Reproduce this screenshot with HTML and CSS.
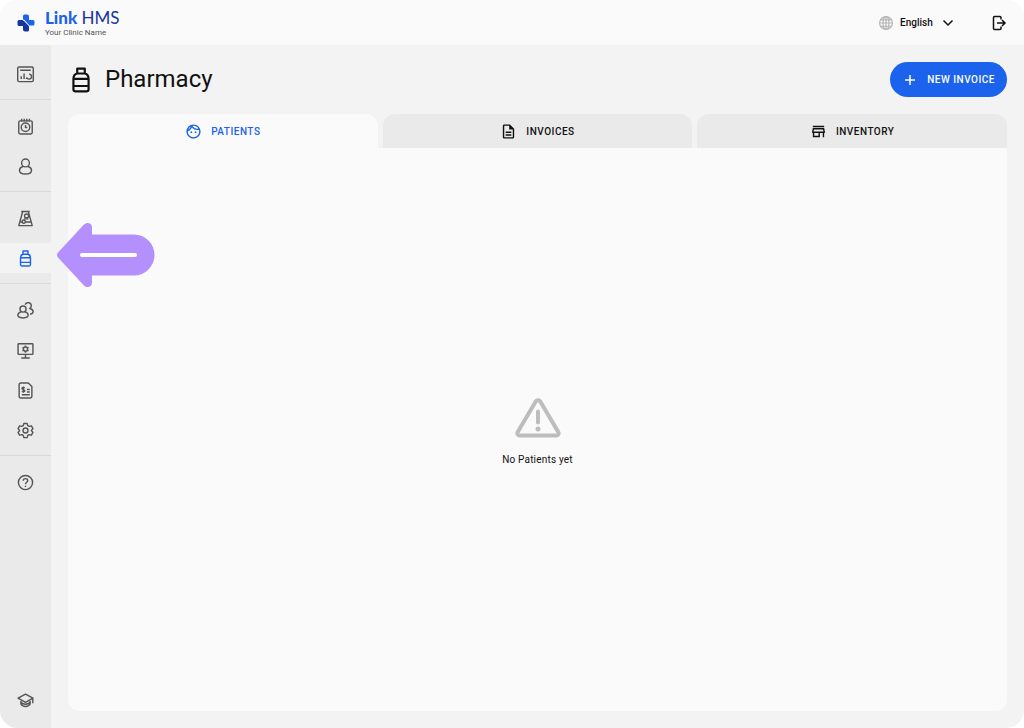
FILE: index.html
```html
<!DOCTYPE html>
<html lang="en">
<head>
  <meta charset="UTF-8">
  <meta name="viewport" content="width=device-width, initial-scale=1">
  <title>Pharmacy - Link HMS</title>
  <link rel="stylesheet" href="styles.css">
</head>
<body>
  <div class="app">
    <header class="topbar">
      <a class="brand" href="#">
        <svg class="brand-mark" viewBox="0 0 36 36" aria-hidden="true">
          <path fill="#1b63ed" d="M12 4a3 3 0 0 1 3-3h5a4 4 0 0 1 4 4v7h8a3 3 0 0 1 3 3v5a3 3 0 0 1-3 3h-6c-2 0-3-1-4-2l-5-6c-1-1-2-3-4-3h-1z"/>
          <path fill="#14359b" d="M1 15a3 3 0 0 1 3-3h6c2 0 3 1 4 2l9 9c1 1 1 2 1 3v6a3 3 0 0 1-3 3h-5a4 4 0 0 1-4-4v-7H4a3 3 0 0 1-3-3z"/>
          <path stroke="#fafafa" stroke-width="1.5" d="M11 11.500q3 0 5 2l8 9.500" fill="none"/>
        </svg>
        <span class="brand-text">
          <span class="brand-name"><b>Link</b> HMS</span>
          <span class="brand-clinic">Your Clinic Name</span>
        </span>
      </a>
      <div class="topbar-actions">
        <label class="language">
          <svg class="globe" viewBox="0 0 24 24" aria-hidden="true">
            <circle cx="12" cy="12" r="11"/>
            <ellipse cx="12" cy="12" rx="5" ry="11"/>
            <path d="M12 1v22M1 12h22M3 6.500h18M3 17.500h18"/>
          </svg>
          <select class="language-select" aria-label="Language">
            <option>English</option>
          </select>
          <svg class="chevron" viewBox="0 0 24 24" aria-hidden="true"><path d="M3 7l9 9 9-9"/></svg>
        </label>
        <button class="icon-button" type="button" aria-label="Log out">
          <svg class="logout" viewBox="0 0 32 32" aria-hidden="true"><path d="M20 9V5a2 2 0 0 0-2-2H7a2 2 0 0 0-2 2v22a2 2 0 0 0 2 2h11a2 2 0 0 0 2-2v-4M12 16h15M22 10l6 6-6 6"/></svg>
        </button>
      </div>
    </header>

    <div class="body">
      <nav class="sidebar" aria-label="Main">
        <div class="nav-group">
          <a class="nav-item" href="#" aria-label="Dashboard">
            <svg viewBox="0 0 24 24"><rect x="1" y="1.500" width="22" height="20.500" rx="2"/><path d="M4.500 6h15M6 18.500v-4M10 18.500v-8M13.500 18.500v-2M17 11.500a3.500 3.500 0 1 1-3.300 4.500"/></svg>
          </a>
        </div>
        <div class="nav-group">
          <a class="nav-item" href="#" aria-label="Appointments">
            <svg viewBox="0 0 24 24"><rect x="2.500" y="4" width="19" height="18.500" rx="2"/><path d="M6.500 1v4M10.200 1v4M13.800 1v4M17.500 1v4M12 10v3.500h2.500"/><circle cx="12" cy="13" r="6"/></svg>
          </a>
          <a class="nav-item" href="#" aria-label="Patients">
            <svg viewBox="0 0 24 24"><circle cx="12" cy="7" r="5.500"/><path d="M8.500 12C5.500 13 3.500 15 3.500 17.500c0 3.200 3.800 5 8.500 5s8.500-1.800 8.500-5c0-2.500-2-4.500-5-5.500"/></svg>
          </a>
        </div>
        <div class="nav-group">
          <a class="nav-item" href="#" aria-label="Laboratory">
            <svg viewBox="0 0 24 24"><path d="M6 2h12M8 2.500L2.500 22h19L16 2.500M5 17h2.500M12 17h7.500"/><circle cx="13.500" cy="8.500" r="2.800"/><circle cx="9.500" cy="16.500" r="2.300"/><path d="M10 12.500h6"/></svg>
          </a>
          <a class="nav-item active" href="#" aria-label="Pharmacy" aria-current="page">
            <svg viewBox="0 0 24 24"><path d="M8.500 1.500h7V6h-7zM8.500 6C6 6.500 5 8.500 5 11v9.500a2 2 0 0 0 2 2h10a2 2 0 0 0 2-2V11c0-2.500-1-4.500-3.500-5M5 11h14M5 17.500h14"/></svg>
          </a>
        </div>
        <div class="nav-group">
          <a class="nav-item" href="#" aria-label="Staff">
            <svg viewBox="0 0 24 24"><circle cx="8.500" cy="10" r="4.300"/><path d="M6 14c-3 .7-4.800 2-4.800 4.500 0 2.500 3.200 4 7.300 4s7.300-1.500 7.300-4c0-2.500-1.800-3.800-4.800-4.500M11.500 3.700a4.500 4.500 0 1 1 6.500 5.500c3 .7 4.800 2.300 4.800 4.500 0 1.800-1.800 3-4.300 3.500"/></svg>
          </a>
          <a class="nav-item" href="#" aria-label="Services">
            <svg viewBox="0 0 24 24"><rect x="1.500" y="2.500" width="21" height="15" rx="1"/><circle cx="12" cy="10" r="3"/><path d="M12 17.500v4M6 22.500h12M12 5v2M12 13v2M7.700 7.500l1.800 1M14.500 11.500l1.800 1M7.700 12.500l1.800-1M14.500 8.500l1.800-1"/></svg>
          </a>
          <a class="nav-item" href="#" aria-label="Billing">
            <svg viewBox="0 0 24 24"><path d="M5 1.500h11l5 5v14a2 2 0 0 1-2 2H5a2 2 0 0 1-2-2v-17a2 2 0 0 1 2-2zM11 8.500c-1-1-4-1-4 .7 0 2 4 1 4 3 0 1.700-3 1.700-4 .7M9 6.500v8.500M14 10.500h4M14 14h4M7 18h11"/></svg>
          </a>
          <a class="nav-item" href="#" aria-label="Settings">
            <svg viewBox="0 0 24 24"><path d="M9.700 2h4.600l.9 3.100 2 1.100 3.100-.8 2.200 3.900-2.300 2.700 2.300 2.700-2.200 3.900-3.100-.8-2 1.100-.9 3.100H9.700l-.9-3.100-2-1.100-3.100.8-2.200-3.900L3.800 12 1.500 9.300l2.200-3.900 3.100.8 2-1.100z"/><circle cx="12" cy="12" r="3.500"/></svg>
          </a>
        </div>
        <div class="nav-group">
          <a class="nav-item" href="#" aria-label="Help">
            <svg viewBox="0 0 24 24"><circle cx="12" cy="12" r="10"/><path d="M8.800 9.500c0-4 6.400-4 6.400-.2 0 2.500-3.200 2.300-3.200 5M12 16.500v2"/></svg>
          </a>
        </div>
        <div class="nav-bottom">
          <a class="nav-item" href="#" aria-label="Tutorials">
            <svg viewBox="0 0 24 24"><path d="M12 3L1.500 8.700 12 14.500l10.500-5.800zM5.500 11v6c2 4.500 11 4.500 13 0v-6M5.500 14.500c3 3.700 10 3.700 13 0M22.300 9v7"/></svg>
          </a>
        </div>
      </nav>

      <main class="content">
        <div class="page-head">
          <h1 class="page-title">
            <svg class="title-icon" viewBox="0 0 24 24" aria-hidden="true"><path d="M8.500 1.500h7V6h-7zM8.500 6C6 6.500 5 8.500 5 11v9.500a2 2 0 0 0 2 2h10a2 2 0 0 0 2-2V11c0-2.500-1-4.500-3.500-5M5 11h14M5 17.500h14"/></svg>
            Pharmacy
          </h1>
          <button class="new-invoice" type="button">
            <svg viewBox="0 0 24 24" aria-hidden="true"><path d="M12 2v20M2 12h20"/></svg>
            NEW INVOICE
          </button>
        </div>

        <div class="tabs" role="tablist">
          <button class="tab selected" type="button" role="tab" aria-selected="true">
            <svg viewBox="0 0 24 24" aria-hidden="true"><path d="M10.250 13a1.250 1.250 0 1 1-2.500 0 1.250 1.250 0 0 1 2.500 0zM15 11.750a1.250 1.250 0 1 0 0 2.500 1.250 1.250 0 0 0 0-2.500zM22 12c0 5.520-4.480 10-10 10S2 17.520 2 12 6.480 2 12 2s10 4.480 10 10zM10.660 4.120C12.060 6.440 14.600 8 17.500 8c.46 0 .91-.05 1.340-.12C17.440 5.560 14.900 4 12 4c-.46 0-.91.05-1.340.12zM4.420 9.470a8.050 8.050 0 0 0 3.660-4.440 8.050 8.050 0 0 0-3.660 4.440zM20 12c0-.78-.12-1.530-.33-2.240-.7.150-1.420.24-2.170.24a10 10 0 0 1-7.760-3.690A10 10 0 0 1 4 11.860V12c0 4.410 3.590 8 8 8s8-3.590 8-8z"/></svg>
            PATIENTS
          </button>
          <button class="tab" type="button" role="tab" aria-selected="false">
            <svg viewBox="0 0 24 24" aria-hidden="true"><path d="M8 16h8v2H8zM8 12h8v2H8zM14 2H6c-1.100 0-2 .9-2 2v16c0 1.100.89 2 1.990 2H18c1.100 0 2-.9 2-2V8zM18 20H6V4h7v5h5z"/></svg>
            INVOICES
          </button>
          <button class="tab" type="button" role="tab" aria-selected="false">
            <svg viewBox="0 0 24 24" aria-hidden="true"><path d="M18.360 9l.6 3H5.040l.6-3zM20 4H4v2h16zM20 7H4l-1 5v2h1v6h10v-6h4v6h2v-6h1v-2zM6 18v-4h6v4z"/></svg>
            INVENTORY
          </button>
        </div>

        <section class="panel" role="tabpanel">
          <svg class="warning" viewBox="0 0 46 40" aria-hidden="true"><path d="M20.700 3.500L2.600 34.300a2.200 2.200 0 0 0 2 3.200h36.800a2.200 2.200 0 0 0 2-3.200L25.300 3.500a2.700 2.700 0 0 0-4.600 0z"/><path class="mark" d="M23 13.500v11"/><circle cx="23" cy="31" r="2.500"/></svg>
          <p class="empty-text">No Patients yet</p>
        </section>
      </main>

      <svg class="pointer" viewBox="0 0 98 66" aria-hidden="true">
        <path d="M1 30.500L27 2.500c3-3 8-1.500 8 2.500v7.500h42a20.500 20.500 0 0 1 0 41H35V61c0 4-5 5.500-8 2.500L1 35.500q-2-2.500 0-5z"/>
        <path class="pointer-line" d="M25 33h53"/>
      </svg>
    </div>
  </div>
</body>
</html>
```

FILE: styles.css
```css
* { box-sizing: border-box; }
body { margin: 0; background: #fff; color: #111; font-family: Roboto, "Liberation Sans", sans-serif; font-size: 10px; }
button, select { font: inherit; color: inherit; border: 0; padding: 0; background: none; cursor: pointer; }
a { color: inherit; text-decoration: none; }
svg { display: block; flex: none; }

.app { display: flex; flex-direction: column; min-height: 100vh; border-radius: 18px; overflow: hidden; background: #f3f3f3; }

/* top bar */
.topbar { display: flex; align-items: center; justify-content: space-between; height: 45px; padding: 0 17px; background: #fafafa; }
.brand { display: flex; align-items: center; gap: 10px; }
.brand-mark { width: 18px; height: 18px; }
.brand-text { display: flex; flex-direction: column; }
.brand-name { font-family: Lato, sans-serif; font-size: 17px; line-height: 20px; color: #14359b; }
.brand-name b { color: #1b63ed; font-weight: 900; }
.brand-clinic { font-size: 8px; line-height: 9px; color: #555; }
.topbar-actions { display: flex; align-items: center; gap: 37px; }
.language { display: flex; align-items: center; }
.globe { width: 14px; height: 14px; margin-right: 7px; fill: none; stroke: #b5b5b5; stroke-width: 2; }
.language-select { appearance: none; width: 42px; font-weight: 500; }
.chevron { width: 12px; height: 12px; fill: none; stroke: #111; stroke-width: 3; }
.logout { width: 16px; height: 16px; fill: none; stroke: #111; stroke-width: 3; }

/* side navigation */
.body { position: relative; display: flex; flex: 1; }
.sidebar { display: flex; flex-direction: column; width: 51px; padding-top: 3px; background: #eaeaea; }
.nav-group { display: flex; flex-direction: column; gap: 10px; padding: 11px 0 10px; }
.nav-group + .nav-group { border-top: 1px solid #d9d9d9; }
.nav-item { display: flex; align-items: center; justify-content: center; height: 30px; }
.nav-item svg { width: 17px; height: 17px; fill: none; stroke: #555; stroke-width: 2; stroke-linejoin: round; }
.nav-item.active { background: #f3f3f3; }
.nav-item.active svg { stroke: #1b63ed; }
.nav-bottom { margin-top: auto; padding-bottom: 13px; }

/* page */
.content { display: flex; flex-direction: column; flex: 1; padding: 17px; }
.page-head { display: flex; align-items: center; justify-content: space-between; margin-bottom: 17px; }
.page-title { display: flex; align-items: center; gap: 11px; margin: 0; font-size: 24px; line-height: 35px; font-weight: 400; }
.title-icon { width: 26px; height: 26px; fill: none; stroke: #111; stroke-width: 2; stroke-linejoin: round; }
.new-invoice { display: flex; align-items: center; gap: 11px; height: 35px; padding: 0 12px 0 14px; border-radius: 18px; background: #1b63ed; color: #fff; font-weight: 500; letter-spacing: 0.05em; }
.new-invoice svg { width: 12px; height: 12px; fill: none; stroke: #fff; stroke-width: 3; }

.tabs { display: grid; grid-template-columns: repeat(3, 1fr); gap: 5px; }
.tab { display: flex; align-items: center; justify-content: center; gap: 9px; height: 34px; border-radius: 12px 12px 0 0; background: #eaeaea; font-weight: 500; letter-spacing: 0.05em; }
.tab svg { width: 17px; height: 17px; fill: currentColor; }
.tab.selected { background: #fafafa; color: #1b63ed; }

.panel { display: flex; flex: 1; flex-direction: column; align-items: center; justify-content: center; gap: 15px; padding-top: 6px; border-radius: 0 0 12px 12px; background: #fafafa; }
.warning { width: 46px; height: 40px; fill: none; stroke: #bdbdbd; stroke-width: 4; }
.warning .mark { stroke-linecap: round; stroke-width: 4; }
.warning circle { fill: #bdbdbd; stroke: none; }
.empty-text { margin: 0; line-height: 14px; letter-spacing: 0.02em; }

/* arrow over the page that points at the active item */
.pointer { position: absolute; left: 57px; top: 177px; width: 98px; height: 66px; fill: #b48ffe; }
.pointer-line { stroke: #fff; stroke-width: 4; stroke-linecap: round; }
```
